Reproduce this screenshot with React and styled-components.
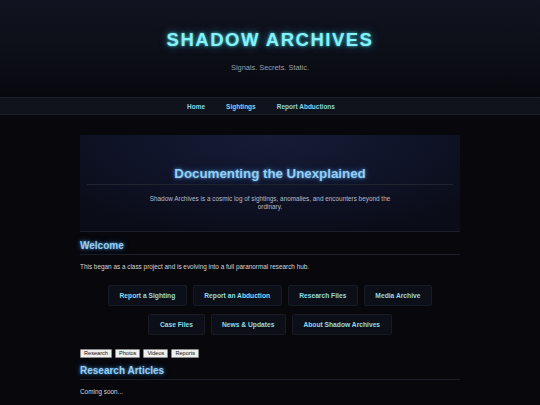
import React from "react";
import styled, { createGlobalStyle } from "styled-components";

const Global = createGlobalStyle`
  html, body { margin: 0; padding: 0; background: #07070c; }
  body { font-family: "Liberation Sans", Arial, sans-serif; color: #d8d8dd; }
  * { box-sizing: border-box; }
`;

const Header = styled.header`
  background: linear-gradient(to bottom, #111320 0%, #0c0e17 60%, #07080d 100%);
  text-align: center;
  padding: 30px 0 24px;
`;

const SiteTitle = styled.h1`
  margin: 0;
  font-size: 18.5px;
  line-height: 20px;
  letter-spacing: 1.5px;
  font-weight: 700;
  color: #86f1f7;
  text-shadow: 0 0 3px rgba(80, 230, 245, 0.8), 0 0 8px rgba(60, 210, 235, 0.55);
`;

const Tagline = styled.p`
  margin: 13px 0 0;
  font-size: 7.4px;
  line-height: 10px;
  color: #9c9ca8;
`;

const Nav = styled.nav`
  height: 18px;
  background: #10121c;
  border-top: 1px solid #1c2030;
  border-bottom: 1px solid #1a1d28;
  display: flex;
  justify-content: center;
  align-items: center;
  gap: 21px;
  padding-right: 18px;
`;

const NavLink = styled.a`
  font-size: 6.5px;
  font-weight: 700;
  color: #86d6e6;
  text-decoration: none;
`;

const Main = styled.main`
  width: 380px;
  margin: 20px auto 0;
`;

const Hero = styled.section`
  background: radial-gradient(ellipse 70% 110% at 50% 0%, #171c36 0%, #11152b 45%, #0a0c17 100%);
  padding: 31px 7px 20px;
  border-bottom: 1px solid #1c1f2a;
  text-align: center;
`;

const HeroTitle = styled.h2`
  margin: 0;
  font-size: 13.3px;
  line-height: 16px;
  font-weight: 700;
  color: #93cff6;
  text-shadow: 0 0 3px rgba(100, 180, 245, 0.75), 0 0 7px rgba(80, 160, 240, 0.45);
  padding-bottom: 2px;
  border-bottom: 1px solid #20242f;
`;

const HeroText = styled.p`
  margin: 10px auto 0;
  max-width: 250px;
  font-size: 6.4px;
  line-height: 8px;
  color: #b9bcc6;
`;

const SectionTitle = styled.h2`
  margin: ${(p) => p.$top}px 0 0;
  font-size: 10px;
  line-height: 12px;
  font-weight: 700;
  color: #93cff6;
  text-shadow: 0 0 3px rgba(100, 180, 245, 0.75), 0 0 7px rgba(80, 160, 240, 0.45);
  padding-bottom: 2px;
  border-bottom: 1px solid #1c1f2a;
`;

const Text = styled.p`
  margin: 7px 0 0;
  font-size: 6.4px;
  line-height: 9px;
  color: #d6d6dc;
`;

const ButtonGrid = styled.div`
  margin-top: 13.5px;
  display: flex;
  flex-direction: column;
  align-items: center;
  gap: 8px;
`;

const ButtonRow = styled.div`
  display: flex;
  justify-content: center;
  gap: 6px;
`;

const LinkButton = styled.a`
  height: 21px;
  display: flex;
  align-items: center;
  padding: 0 10.5px;
  background: #0c0f17;
  border: 1px solid #171b25;
  border-radius: 2px;
  font-size: 6.7px;
  font-weight: 700;
  color: #8edde8;
  text-decoration: none;
  white-space: nowrap;
`;

const Tabs = styled.div`
  margin-top: 14px;
  display: flex;
  gap: 3px;
`;

const Tab = styled.button`
  height: 9px;
  padding: 0 3px;
  font-family: "Liberation Sans", Arial, sans-serif;
  font-size: 5.6px;
  line-height: 7px;
  color: #111;
  background: #efefef;
  border: 1px solid #8a8a8a;
  border-radius: 1px;
`;

const top = ["Report a Sighting", "Report an Abduction", "Research Files", "Media Archive"];
const bottom = ["Case Files", "News & Updates", "About Shadow Archives"];

export default function App() {
  return (
    <>
      <Global />
      <Header>
        <SiteTitle>SHADOW ARCHIVES</SiteTitle>
        <Tagline>Signals. Secrets. Static.</Tagline>
      </Header>
      <Nav>
        <NavLink href="#">Home</NavLink>
        <NavLink href="#">Sightings</NavLink>
        <NavLink href="#">Report Abductions</NavLink>
      </Nav>
      <Main>
        <Hero>
          <HeroTitle>Documenting the Unexplained</HeroTitle>
          <HeroText>
            Shadow Archives is a cosmic log of sightings, anomalies, and encounters beyond the ordinary.
          </HeroText>
        </Hero>
        <SectionTitle $top={8}>Welcome</SectionTitle>
        <Text>This began as a class project and is evolving into a full paranormal research hub.</Text>
        <ButtonGrid>
          <ButtonRow>
            {top.map((t) => (
              <LinkButton key={t} href="#">{t}</LinkButton>
            ))}
          </ButtonRow>
          <ButtonRow>
            {bottom.map((t) => (
              <LinkButton key={t} href="#">{t}</LinkButton>
            ))}
          </ButtonRow>
        </ButtonGrid>
        <Tabs>
          <Tab>Research</Tab>
          <Tab>Photos</Tab>
          <Tab>Videos</Tab>
          <Tab>Reports</Tab>
        </Tabs>
        <SectionTitle $top={7}>Research Articles</SectionTitle>
        <Text>Coming soon...</Text>
      </Main>
    </>
  );
}
